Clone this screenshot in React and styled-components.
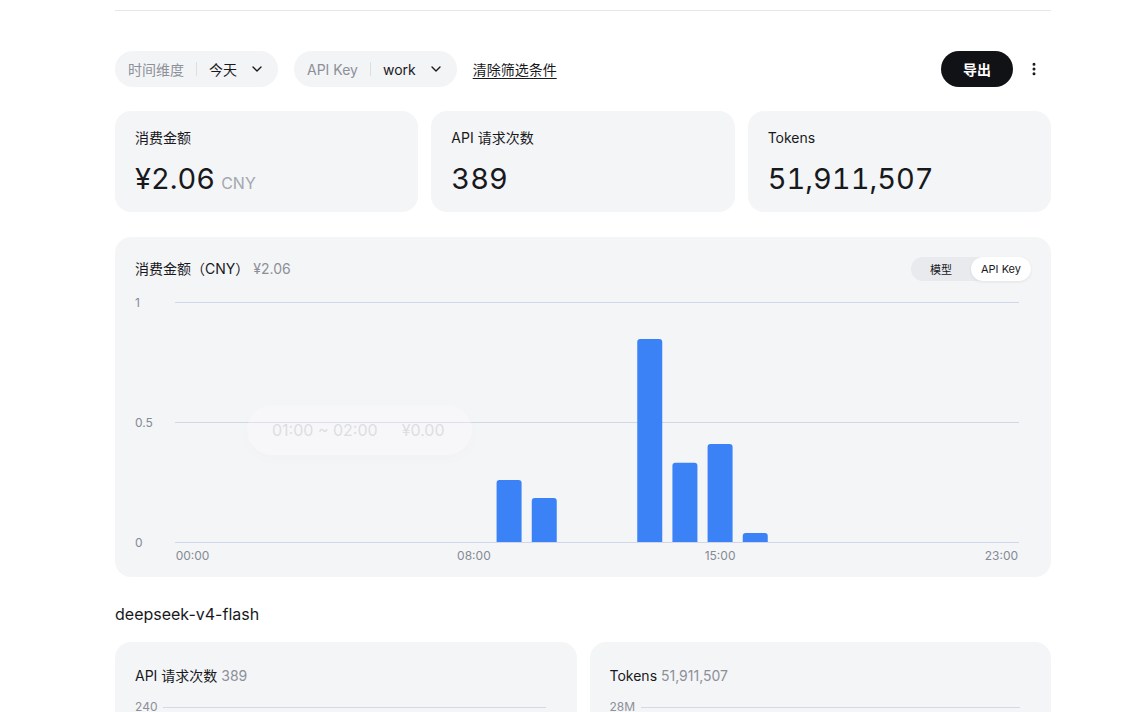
import React from 'react'
import styled, { createGlobalStyle } from 'styled-components'
import { ChevronDown, EllipsisVertical } from 'lucide-react'

const GlobalStyle = createGlobalStyle`
  body {
    margin: 0;
    background: #ffffff;
    font-family: Inter, "Noto Sans CJK SC", sans-serif;
    color: #18191c;
    overflow: hidden;
  }
`

const Page = styled.div`
  width: 936px;
  margin-left: 115px;
  padding-top: 10px;
`

const Rule = styled.div`
  height: 1px;
  background: #e5e7eb;
`

const Toolbar = styled.div`
  display: flex;
  align-items: center;
  gap: 16px;
  margin-top: 40px;
  height: 36px;
`

const Pill = styled.div`
  display: flex;
  align-items: center;
  height: 36px;
  padding: 0 13px 0 13px;
  border-radius: 18px;
  background: #f3f4f6;
  font-size: 14px;
`

const PillLabel = styled.span`
  color: #8c9098;
`

const PillDivider = styled.span`
  width: 1px;
  height: 14px;
  background: #dcdee3;
  margin: 0 12px;
`

const PillValue = styled.span`
  color: #18191c;
  margin-right: 12px;
`

const ClearLink = styled.a`
  font-size: 14px;
  color: #18191c;
  text-decoration: underline;
  text-underline-offset: 3px;
`

const Spacer = styled.div`
  flex: 1;
`

const Actions = styled.div`
  display: flex;
  align-items: center;
  gap: 9px;
  padding-right: 5px;
`

const ExportButton = styled.button`
  height: 36px;
  width: 72px;
  border: none;
  border-radius: 18px;
  background: #111215;
  color: #fff;
  font-family: inherit;
  font-size: 14px;
  font-weight: 600;
`

const MoreButton = styled.span`
  display: flex;
  align-items: center;
  justify-content: center;
  width: 24px;
  height: 24px;
  color: #18191c;
`

const StatRow = styled.div`
  display: grid;
  grid-template-columns: repeat(3, 1fr);
  gap: 13px;
  margin-top: 24px;
`

const Card = styled.div`
  background: #f4f5f7;
  border-radius: 16px;
  padding: 20px;
  box-sizing: border-box;
`

const StatCard = styled(Card)`
  height: 101px;
  padding-top: 17px;
`

const StatLabel = styled.div`
  font-size: 14px;
  line-height: 20px;
`

const StatValue = styled.div`
  margin-top: 13px;
  font-size: 29px;
  line-height: 36px;
  font-variant-numeric: tabular-nums;
`

const Unit = styled.span`
  font-size: 16px;
  color: #a3a7ae;
  margin-left: 6px;
`

const ChartCard = styled(Card)`
  margin-top: 25px;
  height: 340px;
`

const ChartHead = styled.div`
  display: flex;
  align-items: center;
  justify-content: space-between;
  height: 24px;
`

const ChartTitle = styled.div`
  font-size: 14px;
  line-height: 20px;
  height: 20px;
`

const Muted = styled.span`
  color: #8c9098;
`

const Segmented = styled.div`
  display: flex;
  height: 24px;
  border-radius: 12px;
  background: #e8eaee;
`

const Segment = styled.div`
  width: 60px;
  display: flex;
  align-items: center;
  justify-content: center;
  border-radius: 12px;
  font-size: 11px;
  background: ${p => (p.active ? '#ffffff' : 'transparent')};
  box-shadow: ${p => (p.active ? '0 1px 3px rgba(0,0,0,0.08)' : 'none')};
`

const Plot = styled.div`
  position: relative;
  margin-top: 11px;
`

const GhostTip = styled.div`
  position: absolute;
  left: 112px;
  top: 113px;
  width: 225px;
  height: 50px;
  border-radius: 25px;
  background: rgba(255, 255, 255, 0.25);
  box-shadow: 0 4px 16px rgba(0, 0, 0, 0.015);
  display: flex;
  align-items: center;
  gap: 24px;
  padding-left: 25px;
  box-sizing: border-box;
  font-size: 16px;
  color: #dcdee2;
`

const SectionTitle = styled.div`
  margin-top: 26px;
  font-size: 16px;
  line-height: 22px;
`

const ModelRow = styled.div`
  display: grid;
  grid-template-columns: 1fr 1fr;
  gap: 13px;
  margin-top: 17px;
`

const ModelCard = styled(Card)`
  height: 300px;
  padding-top: 24px;
`

const MiniAxis = styled.div`
  display: flex;
  align-items: center;
  margin-top: 13px;
  font-size: 12px;
  line-height: 16px;
  color: #8c9098;
  padding-right: 11px;
`

const MiniLine = styled.div`
  flex: 1;
  height: 1px;
  background: #d4d8e8;
  margin-left: 6px;
`

const hours = Array.from({ length: 24 }, (_, i) => i)
const values = { 9: 0.258, 10: 0.183, 13: 0.846, 14: 0.33, 15: 0.408, 16: 0.0375 }

function BarChart() {
  const x0 = 40
  const w = 844
  const slot = w / 24
  const top = 10
  const h = 240
  const base = top + h
  const labels = { 0: '00:00', 8: '08:00', 15: '15:00', 23: '23:00' }
  return (
    <svg width="896" height="275" viewBox="0 0 896 275" fontFamily="Inter, sans-serif">
      {[0, 0.5, 1].map(v => (
        <g key={v}>
          <line x1={x0} x2={x0 + w} y1={base - v * h + 0.5} y2={base - v * h + 0.5} stroke="#d2d6ea" strokeWidth="1" />
          <text x="0" y={base - v * h + 5} fontSize="12" fill="#858a94">{v}</text>
        </g>
      ))}
      {hours.map(i => {
        const v = values[i]
        if (!v) return null
        const bh = v * h
        const cx = x0 + slot * i + slot / 2
        return (
          <path
            key={i}
            d={`M${cx - 12.5} ${base} V${base - bh + 3} Q${cx - 12.5} ${base - bh} ${cx - 9.5} ${base - bh} H${cx + 9.5} Q${cx + 12.5} ${base - bh} ${cx + 12.5} ${base - bh + 3} V${base} Z`}
            fill="#3b82f6"
          />
        )
      })}
      {Object.entries(labels).map(([i, t]) => (
        <text key={i} x={x0 + slot * i + slot / 2} y={base + 18} fontSize="12" fill="#858a94" textAnchor="middle">{t}</text>
      ))}
    </svg>
  )
}

export default function App() {
  return (
    <>
      <GlobalStyle />
      <Page>
        <Rule />
        <Toolbar>
          <Pill>
            <PillLabel>时间维度</PillLabel>
            <PillDivider />
            <PillValue>今天</PillValue>
            <ChevronDown size={16} strokeWidth={2} />
          </Pill>
          <Pill>
            <PillLabel>API Key</PillLabel>
            <PillDivider />
            <PillValue>work</PillValue>
            <ChevronDown size={16} strokeWidth={2} />
          </Pill>
          <ClearLink>清除筛选条件</ClearLink>
          <Spacer />
          <Actions>
            <ExportButton>导出</ExportButton>
            <MoreButton><EllipsisVertical size={16} strokeWidth={2.5} /></MoreButton>
          </Actions>
        </Toolbar>

        <StatRow>
          <StatCard>
            <StatLabel>消费金额</StatLabel>
            <StatValue>¥2.06<Unit>CNY</Unit></StatValue>
          </StatCard>
          <StatCard>
            <StatLabel>API 请求次数</StatLabel>
            <StatValue>389</StatValue>
          </StatCard>
          <StatCard>
            <StatLabel>Tokens</StatLabel>
            <StatValue>51,911,507</StatValue>
          </StatCard>
        </StatRow>

        <ChartCard>
          <ChartHead>
            <ChartTitle>消费金额（CNY） <Muted>¥2.06</Muted></ChartTitle>
            <Segmented>
              <Segment>模型</Segment>
              <Segment active>API Key</Segment>
            </Segmented>
          </ChartHead>
          <Plot>
            <BarChart />
            <GhostTip>
              <span>01:00 ~ 02:00</span>
              <span>¥0.00</span>
            </GhostTip>
          </Plot>
        </ChartCard>

        <SectionTitle>deepseek-v4-flash</SectionTitle>
        <ModelRow>
          <ModelCard>
            <ChartTitle>API 请求次数 <Muted>389</Muted></ChartTitle>
            <MiniAxis>240<MiniLine /></MiniAxis>
          </ModelCard>
          <ModelCard>
            <ChartTitle>Tokens <Muted>51,911,507</Muted></ChartTitle>
            <MiniAxis>28M<MiniLine /></MiniAxis>
          </ModelCard>
        </ModelRow>
      </Page>
    </>
  )
}
